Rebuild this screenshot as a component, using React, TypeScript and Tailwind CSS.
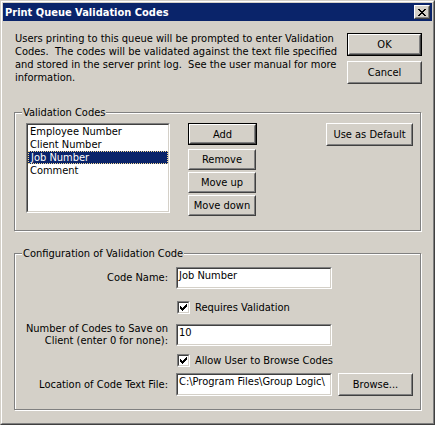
import type { ReactNode } from 'react';
import clsx from 'clsx';

const font = 'font-[family-name:DejaVu_Sans_Condensed,Liberation_Sans,sans-serif] text-[11px] leading-[13px] text-black';

const codes = ['Employee Number', 'Client Number', 'Job Number', 'Comment'];

function Button({ children, isDefault, className }: { children: ReactNode; isDefault?: boolean; className?: string }) {
  return (
    <button type="button" className={clsx('flex bg-[#d4d0c8] p-0', isDefault && 'border border-black', className)}>
      <span className="flex flex-1 border border-t-white border-l-white border-r-[#404040] border-b-[#404040]">
        <span className="flex flex-1 items-center justify-center border border-t-[#d4d0c8] border-l-[#d4d0c8] border-r-[#808080] border-b-[#808080]">
          {children}
        </span>
      </span>
    </button>
  );
}

function Sunken({ children, className }: { children: ReactNode; className?: string }) {
  return (
    <div className={clsx('flex border border-t-[#808080] border-l-[#808080] border-r-white border-b-white', className)}>
      <div className="flex flex-1 flex-col overflow-hidden border border-t-[#404040] border-l-[#404040] border-r-[#d4d0c8] border-b-[#d4d0c8] bg-white">
        {children}
      </div>
    </div>
  );
}

function CheckMark() {
  // classic 7x7 check glyph
  const px = [
    [6, 0], [5, 1], [6, 1], [0, 2], [4, 2], [5, 2], [6, 2],
    [0, 3], [1, 3], [3, 3], [4, 3], [5, 3],
    [0, 4], [1, 4], [2, 4], [3, 4], [4, 4],
    [1, 5], [2, 5], [3, 5], [2, 6],
  ];
  return (
    <svg width="7" height="7" viewBox="0 0 7 7" shapeRendering="crispEdges">
      {px.map(([x, y]) => (
        <rect key={`${x}-${y}`} x={x} y={y} width="1" height="1" fill="#000" />
      ))}
    </svg>
  );
}

function CloseGlyph() {
  const rows = ['XX....XX', '.XX..XX.', '..XXXX..', '...XX...', '..XXXX..', '.XX..XX.', 'XX....XX'];
  return (
    <svg width="8" height="7" viewBox="0 0 8 7" shapeRendering="crispEdges">
      {rows.flatMap((row, y) =>
        row.split('').map((c, x) => (c === 'X' ? <rect key={`${x}-${y}`} x={x} y={y} width="1" height="1" fill="#000" /> : null)),
      )}
    </svg>
  );
}

function Checkbox({ label }: { label: string }) {
  return (
    <div className="flex items-center">
      <div className="w-[148px]" />
      <div className="ml-[9px] flex h-[13px] w-[13px] border border-t-[#808080] border-l-[#808080] border-r-white border-b-white">
        <div className="flex flex-1 items-center justify-center border border-t-[#404040] border-l-[#404040] border-r-[#d4d0c8] border-b-[#d4d0c8] bg-white">
          <CheckMark />
        </div>
      </div>
      <span className="ml-[5px]">{label}</span>
    </div>
  );
}

function GroupBox({ title, children, className }: { title: string; children: ReactNode; className?: string }) {
  return (
    <div className={clsx('relative w-[407px] border border-[#808080] shadow-[1px_1px_0_#fff,inset_1px_1px_0_#fff]', className)}>
      <span className="absolute -top-[7px] left-[7px] bg-[#d4d0c8] px-[1px]">{title}</span>
      {children}
    </div>
  );
}

function Field({ label, value, className }: { label: ReactNode; value: string; className?: string }) {
  return (
    <div className={clsx('flex items-center', className)}>
      <div className="w-[148px] text-right leading-[12px]">{label}</div>
      <Sunken className="ml-[8px] h-[22px] w-[156px]">
        <span className="whitespace-nowrap pl-[1px]">{value}</span>
      </Sunken>
    </div>
  );
}

export default function App() {
  return (
    <div className={clsx('h-[425px] w-[435px] bg-[#d4d0c8]', font)}>
      <div className="flex h-full flex-col border border-t-[#d4d0c8] border-l-[#d4d0c8] border-r-[#404040] border-b-[#404040]">
        <div className="flex flex-1 flex-col border border-t-white border-l-white border-r-[#808080] border-b-[#808080] p-[1px]">
          {/* title bar */}
          <div className="flex h-[18px] items-center justify-between bg-[#0a246a] pl-[2px] pr-[2px]">
            <span className="font-bold text-white">Print Queue Validation Codes</span>
            <span className="flex h-[14px] w-[16px] border border-t-white border-l-white border-r-[#404040] border-b-[#404040] bg-[#d4d0c8]">
              <span className="flex flex-1 items-center justify-center border border-t-[#d4d0c8] border-l-[#d4d0c8] border-r-[#808080] border-b-[#808080]">
                <CloseGlyph />
              </span>
            </span>
          </div>

          <div className="flex flex-col pl-[11px]">
            {/* intro + dialog buttons */}
            <div className="flex h-[91px]">
              <p className="w-[333px] whitespace-nowrap pl-[1px] pt-[11px]">
                Users printing to this queue will be prompted to enter Validation
                <br />
                Codes.&nbsp; The codes will be validated against the text file specified
                <br />
                and stored in the server print log.&nbsp; See the user manual for more
                <br />
                information.
              </p>
              <div className="flex flex-col gap-[5px] pt-[12px]">
                <Button isDefault className="h-[23px] w-[75px]">OK</Button>
                <Button className="h-[23px] w-[75px]">Cancel</Button>
              </div>
            </div>

            <GroupBox title="Validation Codes" className="h-[119px]">
              <div className="flex pl-[11px] pr-[7px] pt-[10px]">
                <Sunken className="h-[90px] w-[144px]">
                  {codes.map((code) => (
                    <div
                      key={code}
                      className={clsx(
                        'h-[13px] whitespace-nowrap pl-[2px]',
                        code === 'Job Number' && 'border border-dotted border-[#f5db95] bg-[#0a246a] pl-[1px] leading-[11px] text-white',
                      )}
                    >
                      {code}
                    </div>
                  ))}
                </Sunken>
                <div className="ml-[18px] flex flex-col">
                  <Button isDefault className="h-[22px] w-[69px]">Add</Button>
                  <div className="mt-[4px] flex flex-col gap-[2px]">
                    <Button className="h-[21px] w-[68px]">Remove</Button>
                    <Button className="h-[21px] w-[68px]">Move up</Button>
                    <Button className="h-[21px] w-[68px]">Move down</Button>
                  </div>
                </div>
                <Button className="ml-auto h-[23px] w-[87px]">Use as Default</Button>
              </div>
            </GroupBox>

            <GroupBox title="Configuration of Validation Code" className="mt-[22px] h-[157px]">
              <div className="flex flex-col pl-[5px] pt-[13px]">
                <Field label="Code Name:" value="Job Number" />
                <div className="mt-[12px]">
                  <Checkbox label="Requires Validation" />
                </div>
                <Field
                  className="mt-[9px]"
                  label={
                    <>
                      Number of Codes to Save on
                      <br />
                      Client (enter 0 for none):
                    </>
                  }
                  value="10"
                />
                <div className="mt-[7px]">
                  <Checkbox label="Allow User to Browse Codes" />
                </div>
                <div className="mt-[6px] flex items-center">
                  <div className="w-[148px] text-right">Location of Code Text File:</div>
                  <Sunken className="ml-[8px] h-[23px] w-[156px]">
                    <span className="whitespace-nowrap pl-[1px]">C:\Program Files\Group Logic\</span>
                  </Sunken>
                  <Button className="ml-[6px] h-[23px] w-[75px]">Browse...</Button>
                </div>
              </div>
            </GroupBox>
          </div>
        </div>
      </div>
    </div>
  );
}
